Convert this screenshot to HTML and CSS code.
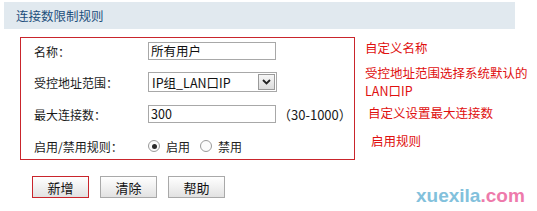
FILE: index.html
```html
<!DOCTYPE html>
<html lang="zh">
<head>
<meta charset="utf-8">
<link rel="stylesheet" href="styles.css">
</head>
<body>
<div class="page">
  <div class="header">连接数限制规则</div>
  <div class="main">
    <div class="box">
      <div class="row r1">
        <span class="label">名称：</span>
        <div class="input">所有用户</div>
      </div>
      <div class="row r2">
        <span class="label">受控地址范围：</span>
        <div class="select"><span class="sel-text">IP组_LAN口IP</span><span class="sel-btn"><svg width="9" height="6" viewBox="0 0 9 6"><path d="M1 1 L4.5 4.5 L8 1" fill="none" stroke="#222" stroke-width="1.8"/></svg></span></div>
      </div>
      <div class="row r3">
        <span class="label">最大连接数：</span>
        <div class="input">300</div>
        <span class="hint">（30-1000）</span>
      </div>
      <div class="row r4">
        <span class="label">启用/禁用规则：</span>
        <span class="radio checked"></span><span class="rlabel">启用</span>
        <span class="radio"></span><span class="rlabel">禁用</span>
      </div>
    </div>
    <div class="notes">
      <div class="note n1">自定义名称</div>
      <div class="note n2">受控地址范围选择系统默认的<br>LAN口IP</div>
      <div class="note n3">自定义设置最大连接数</div>
      <div class="note n4">启用规则</div>
    </div>
  </div>
  <div class="buttons">
    <button class="btn active">新增</button>
    <button class="btn">清除</button>
    <button class="btn">帮助</button>
  </div>
  <div class="watermark"><span class="wm-a">xuexila</span><span class="wm-b">.com</span></div>
</div>
</body>
</html>
```
FILE: styles.css
```css
html, body {
  margin: 0;
  padding: 0;
  background: #ffffff;
}
body {
  font-family: "Noto Sans CJK SC", "Liberation Sans", sans-serif;
  color: #222;
}
.page {
  position: relative;
  width: 537px;
  height: 211px;
  overflow: hidden;
}
.header {
  margin: 2px 22px 0 4px;
  height: 27px;
  line-height: 27px;
  padding-left: 12px;
  background: #e1e9ef;
  color: #1d4f7c;
  font-size: 12.5px;
}
.main {
  display: flex;
  margin-top: 8px;
}
.box {
  flex: none;
  margin-left: 20px;
  width: 320px;
  border: 1px solid #c9252c;
  padding: 3px 0 3px 13px;
  display: flex;
  flex-direction: column;
}
.row {
  display: flex;
  align-items: center;
  height: 20px;
}
.r2 { margin-top: 11px; }
.r3 { margin-top: 12px; }
.r4 { margin-top: 12px; }
.label {
  width: 114px;
  font-size: 12px;
  color: #1a1a1a;
}
.input {
  box-sizing: border-box;
  width: 128px;
  height: 18px;
  border: 1px solid #a8a8a8;
  padding-left: 2px;
  font-size: 12.5px;
  line-height: 16px;
  color: #111;
}
.select {
  box-sizing: border-box;
  width: 129px;
  height: 20px;
  border: 1px solid #a8a8a8;
  display: flex;
  align-items: center;
  justify-content: space-between;
  padding-left: 3px;
}
.sel-text {
  font-size: 12.5px;
  color: #111;
}
.sel-btn {
  box-sizing: border-box;
  width: 17px;
  height: 16px;
  margin-right: 1px;
  border: 1px solid #9a9a9a;
  background: linear-gradient(#f6f6f6, #dcdcdc);
  display: flex;
  align-items: center;
  justify-content: center;
}
.hint {
  margin-left: 2px;
  font-size: 13px;
  color: #1a1a1a;
}
.radio {
  box-sizing: border-box;
  width: 12px;
  height: 12px;
  border-radius: 50%;
  border: 1px solid #9a9a9a;
  background: #fbfbfb;
  position: relative;
}
.radio.checked::after {
  content: "";
  position: absolute;
  left: 2.5px;
  top: 2.5px;
  width: 5px;
  height: 5px;
  border-radius: 50%;
  background: #2a2a2a;
}
.r4 .radio:first-of-type { margin-left: 3px; }
.rlabel {
  margin-left: 6px;
  margin-right: 10px;
  font-size: 12px;
}
.notes {
  margin-left: 10px;
  display: flex;
  flex-direction: column;
  color: #e01010;
  font-size: 12.5px;
  line-height: 16px;
}
.n1 { margin-top: 3px; }
.n2 { margin-top: 8px; line-height: 18px; }
.n3 { margin-top: 5px; margin-left: 3px; }
.n4 { margin-top: 12px; margin-left: 6px; }
.buttons {
  display: flex;
  gap: 11px;
  margin-top: 16px;
  padding-left: 32px;
}
.btn {
  box-sizing: border-box;
  width: 57px;
  height: 22px;
  padding: 0;
  border: 1px solid #a9a9a9;
  background: linear-gradient(#ffffff, #e2e2e2);
  font-family: "Noto Sans CJK SC", sans-serif;
  font-size: 13px;
  color: #111;
}
.btn.active {
  border: 1px solid #c9252c;
}
.watermark {
  position: absolute;
  left: 416px;
  top: 185px;
  font-family: "Liberation Sans", Arial, sans-serif;
  font-weight: bold;
  font-size: 19px;
  line-height: 22px;
}
.wm-a { color: #82c1dc; }
.wm-b { color: #ee7aab; }
```
